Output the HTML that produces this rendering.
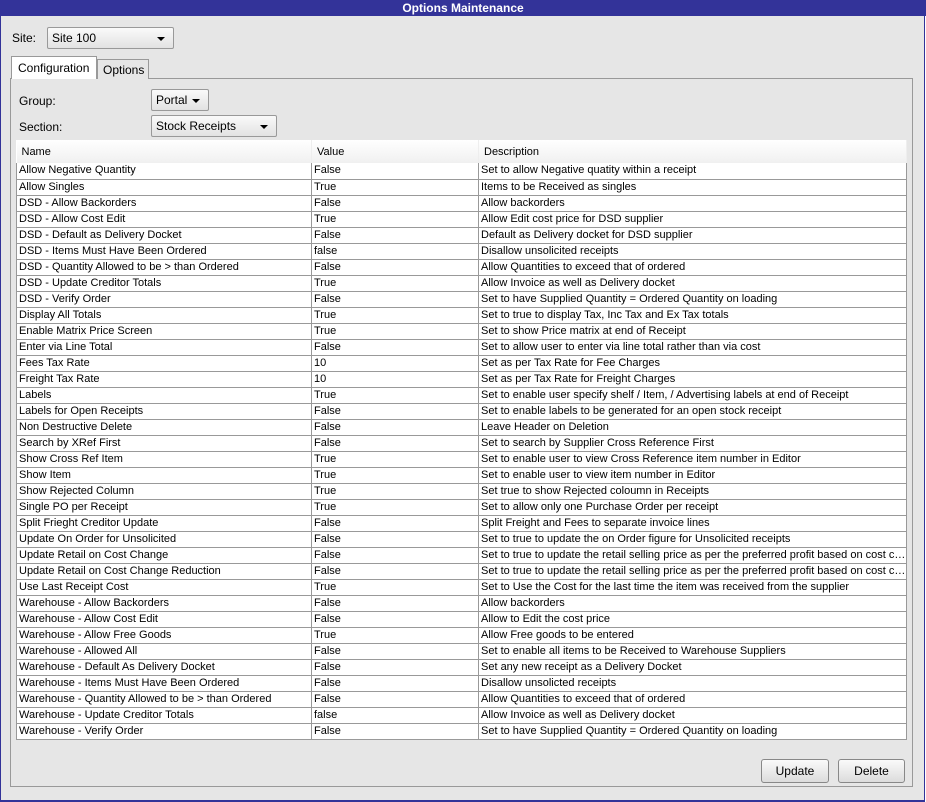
<!DOCTYPE html><html><head><style>
*{margin:0;padding:0;box-sizing:border-box}
body{width:926px;height:802px;background:#fff;font-family:"Liberation Sans",sans-serif;font-size:11px;color:#000;position:relative;overflow:hidden}
.win{position:absolute;left:0;top:0;width:925px;height:802px;background:#e6e6e6;border:1px solid #333399;border-top:none;border-bottom:2px solid #333399}
.title{position:absolute;left:0;top:0;width:926px;height:16px;background:#333399;color:#fff;font-weight:bold;font-size:12px;text-align:center;line-height:16px}
.abs{position:absolute}
.combo{position:absolute;height:22px;border:1px solid #999;border-radius:2px;background:linear-gradient(#fafafa,#e2e2e2);font-size:12px;line-height:20px;padding-left:4px}
.combo:after{content:"";position:absolute;right:8px;top:9px;border-left:4px solid transparent;border-right:4px solid transparent;border-top:4px solid #000}
.panel{position:absolute;left:10px;top:78px;width:903px;height:709px;border:1px solid #999;background:#e6e6e6}
table{position:absolute;left:16px;top:140px;width:890px;border-collapse:collapse;table-layout:fixed;background:#fff}
th{height:23px;font-weight:normal;text-align:left;padding-left:5px;background:linear-gradient(#fff,#f0f0f0);border-right:1px solid #eee;font-size:11px}
td{height:16px;border:1px solid #999;border-top:none;padding-left:2px;white-space:nowrap;overflow:hidden;text-overflow:ellipsis;line-height:15px}
.btn{position:absolute;height:24px;border:1px solid #888;border-radius:3px;background:linear-gradient(#fafafa,#dcdcdc);font-size:12px;text-align:center;line-height:22px}
</style></head><body>
<div class="win"></div>
<div class="title">Options Maintenance</div>
<div class="abs" style="left:12px;top:31px;font-size:12px">Site:</div>
<div class="combo" style="left:47px;top:27px;width:127px">Site 100</div>
<div class="panel"></div>
<div class="abs" style="left:11px;top:56px;width:86px;height:23px;background:#fff;border:1px solid #999;border-bottom:none;font-size:12px;padding:4px 0 0 6px">Configuration</div>
<div class="abs" style="left:97px;top:59px;width:52px;height:20px;background:#e6e6e6;border:1px solid #999;border-bottom:none;font-size:12px;padding:3px 0 0 5px">Options</div>
<div class="abs" style="left:19px;top:94px;font-size:12px">Group:</div>
<div class="combo" style="left:151px;top:89px;width:58px">Portal</div>
<div class="abs" style="left:19px;top:120px;font-size:12px">Section:</div>
<div class="combo" style="left:151px;top:115px;width:126px">Stock Receipts</div>
<table>
<colgroup><col style="width:295px"><col style="width:167px"><col style="width:428px"></colgroup>
<tr><th>Name</th><th>Value</th><th>Description</th></tr>
<tr><td>Allow Negative Quantity</td><td>False</td><td>Set to allow Negative quatity within a receipt</td></tr>
<tr><td>Allow Singles</td><td>True</td><td>Items to be Received as singles</td></tr>
<tr><td>DSD - Allow Backorders</td><td>False</td><td>Allow backorders</td></tr>
<tr><td>DSD - Allow Cost Edit</td><td>True</td><td>Allow Edit cost price for DSD supplier</td></tr>
<tr><td>DSD - Default as Delivery Docket</td><td>False</td><td>Default as Delivery docket for DSD supplier</td></tr>
<tr><td>DSD - Items Must Have Been Ordered</td><td>false</td><td>Disallow unsolicited receipts</td></tr>
<tr><td>DSD - Quantity Allowed to be &gt; than Ordered</td><td>False</td><td>Allow Quantities to exceed that of ordered</td></tr>
<tr><td>DSD - Update Creditor Totals</td><td>True</td><td>Allow Invoice as well as Delivery docket</td></tr>
<tr><td>DSD - Verify Order</td><td>False</td><td>Set to have Supplied Quantity = Ordered Quantity on loading</td></tr>
<tr><td>Display All Totals</td><td>True</td><td>Set to true to display Tax, Inc Tax and Ex Tax totals</td></tr>
<tr><td>Enable Matrix Price Screen</td><td>True</td><td>Set to show Price matrix at end of Receipt</td></tr>
<tr><td>Enter via Line Total</td><td>False</td><td>Set to allow user to enter via line total rather than via cost</td></tr>
<tr><td>Fees Tax Rate</td><td>10</td><td>Set as per Tax Rate for Fee Charges</td></tr>
<tr><td>Freight Tax Rate</td><td>10</td><td>Set as per Tax Rate for Freight Charges</td></tr>
<tr><td>Labels</td><td>True</td><td>Set to enable user specify shelf / Item, / Advertising labels at end of Receipt</td></tr>
<tr><td>Labels for Open Receipts</td><td>False</td><td>Set to enable labels to be generated for an open stock receipt</td></tr>
<tr><td>Non Destructive Delete</td><td>False</td><td>Leave Header on Deletion</td></tr>
<tr><td>Search by XRef First</td><td>False</td><td>Set to search by Supplier Cross Reference First</td></tr>
<tr><td>Show Cross Ref Item</td><td>True</td><td>Set to enable user to view Cross Reference item number in Editor</td></tr>
<tr><td>Show Item</td><td>True</td><td>Set to enable user to view item number in Editor</td></tr>
<tr><td>Show Rejected Column</td><td>True</td><td>Set true to show Rejected coloumn in Receipts</td></tr>
<tr><td>Single PO per Receipt</td><td>True</td><td>Set to allow only one Purchase Order per receipt</td></tr>
<tr><td>Split Frieght Creditor Update</td><td>False</td><td>Split Freight and Fees to separate invoice lines</td></tr>
<tr><td>Update On Order for Unsolicited</td><td>False</td><td>Set to true to update the on Order figure for Unsolicited receipts</td></tr>
<tr><td>Update Retail on Cost Change</td><td>False</td><td>Set to true to update the retail selling price as per the preferred profit based on cost change</td></tr>
<tr><td>Update Retail on Cost Change Reduction</td><td>False</td><td>Set to true to update the retail selling price as per the preferred profit based on cost change</td></tr>
<tr><td>Use Last Receipt Cost</td><td>True</td><td>Set to Use the Cost for the last time the item was received from the supplier</td></tr>
<tr><td>Warehouse - Allow Backorders</td><td>False</td><td>Allow backorders</td></tr>
<tr><td>Warehouse - Allow Cost Edit</td><td>False</td><td>Allow to Edit the cost price</td></tr>
<tr><td>Warehouse - Allow Free Goods</td><td>True</td><td>Allow Free goods to be entered</td></tr>
<tr><td>Warehouse - Allowed All</td><td>False</td><td>Set to enable all items to be Received to Warehouse Suppliers</td></tr>
<tr><td>Warehouse - Default As Delivery Docket</td><td>False</td><td>Set any new receipt as a Delivery Docket</td></tr>
<tr><td>Warehouse - Items Must Have Been Ordered</td><td>False</td><td>Disallow unsolicted receipts</td></tr>
<tr><td>Warehouse - Quantity Allowed to be &gt; than Ordered</td><td>False</td><td>Allow Quantities to exceed that of ordered</td></tr>
<tr><td>Warehouse - Update Creditor Totals</td><td>false</td><td>Allow Invoice as well as Delivery docket</td></tr>
<tr><td>Warehouse - Verify Order</td><td>False</td><td>Set to have Supplied Quantity = Ordered Quantity on loading</td></tr>
</table>
<div class="btn" style="left:761px;top:759px;width:68px">Update</div>
<div class="btn" style="left:838px;top:759px;width:67px">Delete</div>
</body></html>
